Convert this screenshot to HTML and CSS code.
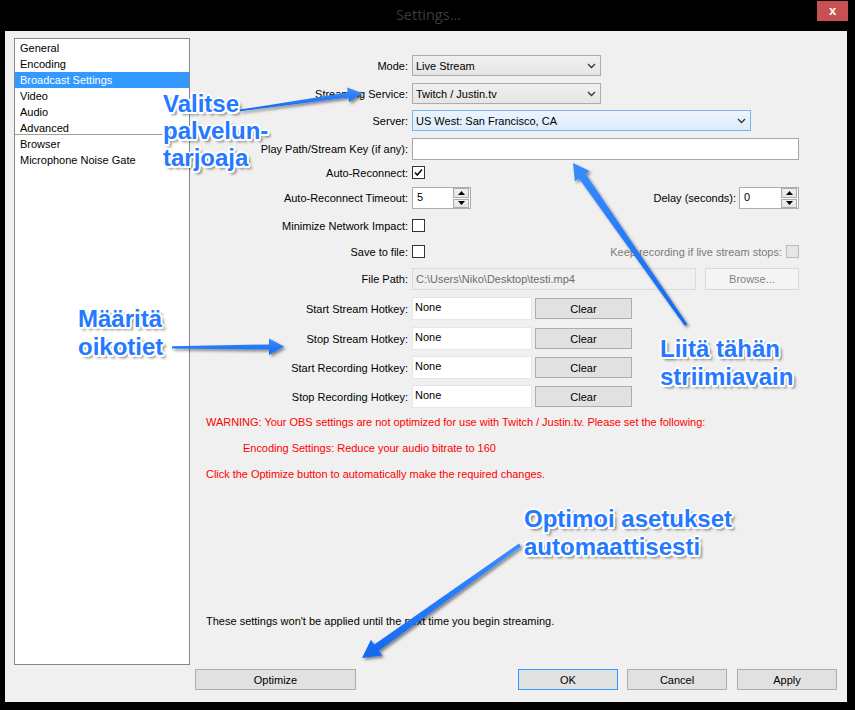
FILE: index.html
```html
<!DOCTYPE html>
<html>
<head>
<meta charset="utf-8">
<link rel="stylesheet" href="styles.css">
</head>
<body>
<div class="window">
  <div class="titlebar">
    <span></span>
    <span class="title">Settings...</span>
    <span class="close">x</span>
  </div>
  <div class="client">
    <div class="top">
      <ul class="list">
        <li>General</li>
        <li>Encoding</li>
        <li class="sel">Broadcast Settings</li>
        <li>Video</li>
        <li>Audio</li>
        <li>Advanced</li>
        <li class="sep"></li>
        <li>Browser</li>
        <li>Microphone Noise Gate</li>
      </ul>
      <div class="main">
        <div class="row r1">
          <span class="lbl">Mode:</span>
          <div class="combo combo-sm"><span>Live Stream</span><svg class="chev" width="9" height="6" viewBox="0 0 9 6"><path d="M1 1 L4.5 4.5 L8 1" fill="none" stroke="#333" stroke-width="1.3"/></svg></div>
        </div>
        <div class="row r2">
          <span class="lbl">Streaming Service:</span>
          <div class="combo combo-sm"><span>Twitch / Justin.tv</span><svg class="chev" width="9" height="6" viewBox="0 0 9 6"><path d="M1 1 L4.5 4.5 L8 1" fill="none" stroke="#333" stroke-width="1.3"/></svg></div>
        </div>
        <div class="row r3">
          <span class="lbl">Server:</span>
          <div class="combo combo-lg hot"><span>US West: San Francisco, CA</span><svg class="chev" width="9" height="6" viewBox="0 0 9 6"><path d="M1 1 L4.5 4.5 L8 1" fill="none" stroke="#333" stroke-width="1.3"/></svg></div>
        </div>
        <div class="row r4">
          <span class="lbl">Play Path/Stream Key (if any):</span>
          <div class="field key"></div>
        </div>
        <div class="row r5">
          <span class="lbl">Auto-Reconnect:</span>
          <span class="cb"><svg width="11" height="11" viewBox="0 0 11 11"><path d="M2 5.5 L4.3 8 L9 2.5" fill="none" stroke="#111" stroke-width="1.6"/></svg></span>
        </div>
        <div class="row r6">
          <span class="lbl">Auto-Reconnect Timeout:</span>
          <div class="spin spin-a">
            <span class="val">5</span>
            <span class="btns">
              <span class="sb"><svg width="7" height="4" viewBox="0 0 7 4"><path d="M0 4 L3.5 0 L7 4Z" fill="#000"/></svg></span>
              <span class="sb"><svg width="7" height="4" viewBox="0 0 7 4"><path d="M0 0 L3.5 4 L7 0Z" fill="#000"/></svg></span>
            </span>
          </div>
          <span class="delay-lbl">Delay (seconds):</span>
          <div class="spin spin-b">
            <span class="val">0</span>
            <span class="btns">
              <span class="sb"><svg width="7" height="4" viewBox="0 0 7 4"><path d="M0 4 L3.5 0 L7 4Z" fill="#000"/></svg></span>
              <span class="sb"><svg width="7" height="4" viewBox="0 0 7 4"><path d="M0 0 L3.5 4 L7 0Z" fill="#000"/></svg></span>
            </span>
          </div>
        </div>
        <div class="row r7">
          <span class="lbl">Minimize Network Impact:</span>
          <span class="cb"></span>
        </div>
        <div class="row r8">
          <span class="lbl">Save to file:</span>
          <span class="cb"></span>
          <span class="keep-lbl">Keep recording if live stream stops:</span>
          <span class="cb dis"></span>
        </div>
        <div class="row r9">
          <span class="lbl">File Path:</span>
          <div class="field path">C:\Users\Niko\Desktop\testi.mp4</div>
          <div class="btn browse">Browse...</div>
        </div>
        <div class="row hkrow r10">
          <span class="lbl">Start Stream Hotkey:</span>
          <div class="hk">None</div>
          <div class="btn clear">Clear</div>
        </div>
        <div class="row hkrow r11">
          <span class="lbl">Stop Stream Hotkey:</span>
          <div class="hk">None</div>
          <div class="btn clear">Clear</div>
        </div>
        <div class="row hkrow r12">
          <span class="lbl">Start Recording Hotkey:</span>
          <div class="hk">None</div>
          <div class="btn clear">Clear</div>
        </div>
        <div class="row hkrow r13">
          <span class="lbl">Stop Recording Hotkey:</span>
          <div class="hk">None</div>
          <div class="btn clear">Clear</div>
        </div>
        <div class="warn">
          <div>WARNING: Your OBS settings are not optimized for use with Twitch / Justin.tv. Please set the following:</div>
          <div class="ind">Encoding Settings: Reduce your audio bitrate to 160</div>
          <div>Click the Optimize button to automatically make the required changes.</div>
        </div>
        <div class="note">These settings won't be applied until the next time you begin streaming.</div>
      </div>
    </div>
    <div class="buttons">
      <div class="btn optimize">Optimize</div>
      <div class="btn ok">OK</div>
      <div class="btn cancel">Cancel</div>
      <div class="btn apply">Apply</div>
    </div>
  </div>

  <svg class="arrows" width="855" height="710" viewBox="0 0 855 710">
    <defs>
      <linearGradient id="ag" x1="0" y1="0" x2="0" y2="1">
        <stop offset="0" stop-color="#3a8cff"/>
        <stop offset="1" stop-color="#1468f0"/>
      </linearGradient>
      <filter id="sh" x="-20%" y="-20%" width="140%" height="140%">
        <feDropShadow dx="2" dy="2" stdDeviation="1.5" flood-color="#000" flood-opacity="0.45"/>
      </filter>
    </defs>
    <g fill="url(#ag)" filter="url(#sh)">
      <polygon points="239.9,109.6 347.8,92.4 347.1,87.5 362,93 349.1,102.3 348.4,97.4 240.1,111.2"/>
      <polygon points="172,346.2 269,344.4 269,338.5 284,346.5 269,355 269,349.6 172,348.6"/>
      <polygon points="687.2,324.1 585.5,173.8 589.6,170.9 573,163 574.8,181.3 579.0,178.4 684.8,325.9"/>
      <polygon points="521,546.4 378.9,650.7 382.3,655.5 362,658 370.9,639.7 374.3,644.5 519,543.6"/>
    </g>
  </svg>
  <div class="ann a1">Valitse<br>palvelun-<br>tarjoaja</div>
  <div class="ann a2">Määritä<br>oikotiet</div>
  <div class="ann a3">Liitä tähän<br>striimiavain</div>
  <div class="ann a4">Optimoi asetukset<br>automaattisesti</div>
</div>
</body>
</html>
```

FILE: styles.css
```css
html, body {
  margin: 0;
  padding: 0;
  background: #000;
}

body {
  font: 11px "Liberation Sans", Arial, sans-serif;
  color: #000;
}

.window {
  position: relative;
  width: 855px;
  height: 710px;
  overflow: hidden;
}

/* Title bar */
.titlebar {
  height: 31px;
  display: grid;
  grid-template-columns: 1fr auto 1fr;
  align-items: start;
}

.title {
  font: 14.5px "Open Sans", sans-serif;
  color: #3a3a3a;
  line-height: 30px;
  padding-left: 2px;
}

.close {
  justify-self: end;
  margin: 1px 7px 0 0;
  width: 31px;
  height: 20px;
  background: #c75050;
  color: #fff;
  font: bold 13px "Liberation Sans", Arial, sans-serif;
  display: flex;
  align-items: center;
  justify-content: center;
  padding-bottom: 2px;
  box-sizing: border-box;
}

/* Client area */
.client {
  margin: 0 8px 0 5px;
  height: 671px;
  background: #f0f0f0;
  padding: 7px 0 0 9px;
  box-sizing: border-box;
}

.top {
  display: flex;
  height: 627px;
}

.list {
  width: 176px;
  height: 627px;
  box-sizing: border-box;
  border: 1px solid #828790;
  background: #fff;
  margin: 0;
  padding: 1px 0 0;
  list-style: none;
  flex: none;
}

.list li {
  height: 16px;
  line-height: 16px;
  padding-left: 5px;
  white-space: nowrap;
}

.list li.sel {
  background: #3399ff;
  color: #fff;
}

.list li.sep {
  height: 1px;
  background: #a0a0a0;
  margin: -2px 0 1px;
  padding: 0;
}

.main {
  flex: 1;
  display: flex;
  flex-direction: column;
  padding: 17px 51px 37px 0;
  box-sizing: border-box;
}

.row {
  display: flex;
  align-items: center;
  flex: none;
}

.lbl {
  width: 218px;
  margin-right: 4px;
  text-align: right;
  flex: none;
  white-space: nowrap;
}

.r1 { height: 21px; }
.r2 { height: 21px; margin-top: 7px; }
.r3 { height: 21px; margin-top: 6px; }
.r4 { height: 21px; margin-top: 7px; }
.r5 { height: 13px; margin-top: 7px; }
.r6 { height: 22px; margin-top: 8px; }
.r7 { height: 13px; margin-top: 10px; }
.r8 { height: 13px; margin-top: 13px; }
.r9 { height: 22px; margin-top: 10px; }
.r10 { height: 23px; margin-top: 7px; }
.r11 { height: 23px; margin-top: 7px; }
.r12 { height: 23px; margin-top: 6px; }
.r13 { height: 23px; margin-top: 6px; }

/* Combo boxes */
.combo {
  height: 21px;
  box-sizing: border-box;
  border: 1px solid #acacac;
  background: linear-gradient(#f0f0f0, #e5e5e5);
  display: flex;
  align-items: center;
  justify-content: space-between;
  padding: 0 4px 0 3px;
  flex: none;
}

.combo-sm { width: 189px; }
.combo-lg { width: 339px; }

.combo.hot {
  border-color: #7eb4ea;
  background: linear-gradient(#ecf4fc, #dcecfc);
}

/* Fields */
.field {
  box-sizing: border-box;
  border: 1px solid #abadb3;
  background: #fff;
  height: 100%;
  flex: none;
  padding: 0 3px;
  display: flex;
  align-items: center;
}

.field.key {
  width: 387px;
  height: 22px;
  border-color: #a6a6a6;
}

.field.path {
  width: 284px;
  background: #f0f0f0;
  border-color: #d9d9d9;
  color: #6d6d6d;
}

/* Checkboxes */
.cb {
  width: 13px;
  height: 13px;
  box-sizing: border-box;
  border: 1px solid #333;
  background: #fff;
  flex: none;
  display: flex;
  align-items: center;
  justify-content: center;
}

.cb.dis {
  border-color: #bcbcbc;
  background: #e6e6e6;
}

.keep-lbl {
  margin-left: auto;
  margin-right: 4px;
  color: #7a7a7a;
}

/* Spin boxes */
.spin {
  height: 22px;
  box-sizing: border-box;
  border: 1px solid #abadb3;
  background: #fff;
  display: flex;
  flex: none;
}

.spin-a { width: 59px; }
.spin-b { width: 60px; }

.spin .val {
  flex: 1;
  padding: 0 0 0 4px;
  line-height: 18px;
}

.spin .btns {
  width: 16px;
  display: flex;
  flex-direction: column;
  gap: 1px;
  padding: 0 1px 0 0;
}

.spin .sb {
  flex: 1;
  box-sizing: border-box;
  border: 1px solid #acacac;
  background: linear-gradient(#f0f0f0, #e5e5e5);
  display: flex;
  align-items: center;
  justify-content: center;
}

.delay-lbl {
  margin-left: auto;
  margin-right: 3px;
}

/* Buttons */
.btn {
  height: 21px;
  box-sizing: border-box;
  border: 1px solid #adadad;
  background: #e1e1e1;
  display: flex;
  align-items: center;
  justify-content: center;
  flex: none;
}

.browse {
  margin-left: auto;
  width: 94px;
  background: #f4f4f4;
  border-color: #d9d9d9;
  color: #838383;
  height: 22px;
}

.hk {
  width: 120px;
  height: 23px;
  box-sizing: border-box;
  background: #fff;
  border: 1px solid #e6e6e6;
  padding: 0 2px;
  line-height: 19px;
  flex: none;
}

.clear {
  width: 97px;
  margin-left: 3px;
}

/* Warning text */
.warn {
  color: #ff0000;
  line-height: 26px;
  padding-left: 16px;
  margin-top: 1px;
  letter-spacing: -0.03px;
}

.warn .ind {
  padding-left: 37px;
}

.note {
  margin-top: auto;
  padding-left: 16px;
  line-height: 14px;
}

/* Bottom buttons */
.buttons {
  display: flex;
  margin: 4px 10px 0 181px;
}

.optimize { width: 161px; }
.ok { width: 100px; margin-left: auto; border-color: #3399ff; }
.cancel { width: 100px; margin-left: 9px; }
.apply { width: 100px; margin-left: 10px; }

/* Annotation overlay */
.arrows {
  position: absolute;
  left: 0;
  top: 0;
  pointer-events: none;
}

.ann {
  position: absolute;
  font: bold 24px/28px "Liberation Sans", Arial, sans-serif;
  color: #2479ff;
  white-space: nowrap;
  text-shadow:
    -2px 0 #fff, 2px 0 #fff, 0 -2px #fff, 0 2px #fff,
    -1.5px -1.5px #fff, 1.5px -1.5px #fff, -1.5px 1.5px #fff, 1.5px 1.5px #fff,
    3px 3px 3px rgba(0, 0, 0, 0.55);
}

.a1 { left: 163px; top: 90px; line-height: 27px; }
.a2 { left: 78px; top: 305px; }
.a3 { left: 660px; top: 335px; }
.a4 { left: 524px; top: 505px; }
```
